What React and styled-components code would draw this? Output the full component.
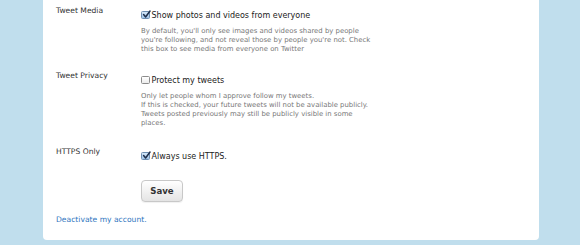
import React from "react";
import styled, { createGlobalStyle } from "styled-components";

const Global = createGlobalStyle`
  html, body { margin: 0; padding: 0; background: #c0deed; }
  body { font-family: "DejaVu Sans", "Liberation Sans", sans-serif; }
`;

const Page = styled.div`
  width: 580px;
  height: 245px;
  background: #c0deed;
  overflow: hidden;
`;

const Panel = styled.div`
  margin-left: 43px;
  width: 496px;
  box-sizing: border-box;
  background: #fff;
  border-radius: 0 0 4px 4px;
  padding: 9px 0 14px 13px;
  display: flex;
  flex-direction: column;
`;

const Field = styled.div`
  display: grid;
  grid-template-columns: 85px 1fr;
  margin-top: ${(p) => p.$gap || 0}px;
`;

const Label = styled.div`
  font-size: 7.6px;
  color: #333;
  line-height: 10px;
  margin-top: ${(p) => p.$offset || 0}px;
`;

const Control = styled.div`
  display: flex;
  flex-direction: column;
`;

const CheckRow = styled.label`
  display: flex;
  align-items: center;
  gap: 2px;
  height: 12px;
  font-size: 8px;
  color: #222;
`;

const Box = styled.span`
  width: 8.5px;
  height: 8.5px;
  box-sizing: border-box;
  border-radius: 1.5px;
  border: 1px solid ${(p) => (p.$checked ? "#6d8fb3" : "#8c8c8c")};
  background: ${(p) =>
    p.$checked
      ? "linear-gradient(#d6e8f8, #9fc3e8)"
      : "linear-gradient(#ffffff, #ececec)"};
  position: relative;
  flex: none;
  svg { position: absolute; left: 0px; top: -2px; }
`;

const Description = styled.p`
  margin: 6px 0 0;
  font-size: 6.9px;
  line-height: 9px;
  color: #777;
  width: 230px;
`;

const SaveButton = styled.button`
  margin: 18px 0 0 85px;
  width: 42px;
  height: 22px;
  box-sizing: border-box;
  border: 1px solid #c8c8c8;
  border-radius: 4px;
  background: linear-gradient(#ffffff, #e4e4e4);
  font-family: "DejaVu Sans", sans-serif;
  font-weight: bold;
  font-size: 8.6px;
  color: #333;
  padding: 0;
  box-shadow: 0 1px 1px rgba(0,0,0,0.06);
`;

const Link = styled.a`
  margin-top: 12px;
  font-size: 7.6px;
  line-height: 12px;
  color: #2f76c0;
  text-decoration: none;
  align-self: flex-start;
`;

function Check({ checked, children }) {
  return (
    <CheckRow>
      <Box $checked={checked}>
        {checked && (
          <svg width="9" height="9" viewBox="0 0 9 9">
            <path d="M1.6 4.6 L3.6 7 L8 1" fill="none" stroke="#1d2e4a" strokeWidth="1.5" strokeLinecap="round" strokeLinejoin="round" />
          </svg>
        )}
      </Box>
      {children}
    </CheckRow>
  );
}

export default function App() {
  return (
    <Page>
      <Global />
      <Panel>
        <Field>
          <Label $offset={-3}>Tweet Media</Label>
          <Control>
            <Check checked>Show photos and videos from everyone</Check>
            <Description>
              By default, you'll only see images and videos shared by people
              you're following, and not reveal those by people you're not. Check
              this box to see media from everyone on Twitter
            </Description>
          </Control>
        </Field>
        <Field $gap={20}>
          <Label $offset={-3}>Tweet Privacy</Label>
          <Control>
            <Check>Protect my tweets</Check>
            <Description>
              Only let people whom I approve follow my tweets.
              <br />
              If this is checked, your future tweets will not be available publicly.
              Tweets posted previously may still be publicly visible in some
              places.
            </Description>
          </Control>
        </Field>
        <Field $gap={22}>
          <Label $offset={-3}>HTTPS Only</Label>
          <Control>
            <Check checked>Always use HTTPS.</Check>
          </Control>
        </Field>
        <SaveButton>Save</SaveButton>
        <Link href="#">Deactivate my account.</Link>
      </Panel>
    </Page>
  );
}
